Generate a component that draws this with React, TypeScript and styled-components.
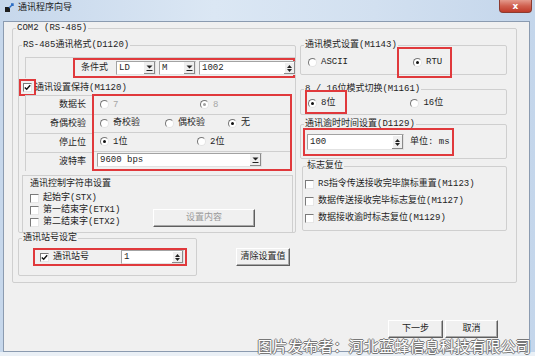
import React from 'react';
import styled, { createGlobalStyle } from 'styled-components';

const RED = '#e0393c';
const LINE = '#cfcfcf';

const GlobalStyle = createGlobalStyle`
  html, body { margin: 0; padding: 0; }
  body {
    width: 535px;
    height: 356px;
    overflow: hidden;
    background: #eaf0f6;
    font-family: "Liberation Mono", "Noto Sans CJK SC", monospace;
    font-size: 9px;
    line-height: 10px;
    color: #1e1e1e;
  }
`;

const Page = styled.div`
  position: relative;
  width: 535px;
  height: 356px;
`;

const Window = styled.div`
  width: 535px;
  height: 352px;
  display: flex;
  flex-direction: column;
  background: linear-gradient(90deg, #c6d7eb 0%, #dbe7f4 40%, #d2e0f0 70%, #c4d6eb 100%);
`;

const TitleBar = styled.div`
  height: 21px;
  flex: none;
  display: flex;
  align-items: flex-start;
  padding-left: 5px;
`;

const TitleIcon = styled.svg`
  margin-top: 3px;
  flex: none;
`;

const TitleText = styled.span`
  margin: 3px 0 0 4px;
  color: #1a1a1a;
`;

const CloseButton = styled.div`
  margin: 0 3px 0 auto;
  width: 33px;
  height: 13px;
  box-sizing: border-box;
  border: 1px solid #8c3b30;
  border-top: none;
  border-radius: 0 0 4px 4px;
  background: linear-gradient(180deg, #e49a8c 0%, #d0604f 50%, #bf3b2a 100%);
  color: #fff;
  font-family: "DejaVu Sans", sans-serif;
  font-weight: bold;
  font-size: 9px;
  line-height: 12px;
  text-align: center;
`;

const Body = styled.div`
  flex: 1;
  margin: 0 5px 0 3px;
  background: #f0f0f0;
  border: 1px solid #8b9bb0;
  padding: 1px 0 0 8px;
  display: flex;
  flex-direction: column;
`;

const Group = styled.fieldset<{ $w: number; $h: number }>`
  margin: 0;
  padding: 0;
  min-width: 0;
  box-sizing: border-box;
  width: ${p => p.$w}px;
  height: ${p => p.$h}px;
  border: 1px solid ${LINE};
  border-radius: 2px;
`;

const Legend = styled.legend`
  margin-left: 3px;
  padding: 0 1px;
  line-height: 10px;
`;

const Columns = styled.div`
  display: flex;
  gap: 4px;
  padding: 7px 9px 0 5px;
`;

const Column = styled.div`
  display: flex;
  flex-direction: column;
`;

const GroupInner = styled.div<{ $pad: string }>`
  padding: ${p => p.$pad};
  display: flex;
  flex-direction: column;
`;

/* red annotation box that does not take any room in the flow */
const Mark = styled.div<{ $t: number; $r: number; $b: number; $l: number }>`
  display: inline-flex;
  align-items: center;
  flex: none;
  border: 2px solid ${RED};
  padding: ${p => `${p.$t}px ${p.$r}px ${p.$b}px ${p.$l}px`};
  margin: ${p => `${-p.$t - 2}px ${-p.$r - 2}px ${-p.$b - 2}px ${-p.$l - 2}px`};
`;

const RedFrame = styled.div`
  border: 2px solid ${RED};
  box-sizing: border-box;
`;

const ConditionRow = styled.div`
  height: 20px;
  display: flex;
  justify-content: flex-end;
  border-top: 1px solid ${LINE};
  border-left: 1px solid ${LINE};
`;

const ConditionBox = styled(RedFrame)`
  width: 222px;
  display: flex;
  align-items: center;
  gap: 3px;
  padding-left: 6px;
`;

const Plain = styled.span<{ $w?: number }>`
  flex: none;
  ${p => (p.$w ? `width: ${p.$w}px;` : '')}
`;

const Combo = styled.div<{ $w: number }>`
  width: ${p => p.$w}px;
  height: 14px;
  flex: none;
  box-sizing: border-box;
  border: 1px solid #a3a3a3;
  border-right-color: #e2e2e2;
  border-bottom-color: #e2e2e2;
  background: #fff;
  display: flex;
  align-items: center;
  padding-left: 2px;
`;

const ComboBtn = styled.span`
  margin-left: auto;
  width: 11px;
  height: 12px;
  background: #efefef;
  border-left: 1px solid #fff;
  box-shadow: inset -1px -1px 0 #8a8a8a;
  display: flex;
  align-items: center;
  justify-content: center;
`;

const SpinBtn = styled.span`
  margin-left: auto;
  width: 11px;
  height: 100%;
  background: #efefef;
  box-shadow: inset -1px -1px 0 #8a8a8a, inset 1px 1px 0 #fff;
  display: flex;
  flex-direction: column;
  align-items: center;
  justify-content: center;
  gap: 1px;
`;

const CheckRow = styled.div`
  display: flex;
  align-items: center;
  height: 13px;
  margin: 3px 0 0 4px;
  gap: 3px;
`;

const ParamTable = styled.div`
  display: flex;
  margin-left: 6px;
  height: 77px;
`;

const LabelCol = styled.div`
  width: 67px;
  display: flex;
  flex-direction: column;
  padding-top: 1px;
`;

const LabelCell = styled.div`
  height: 19px;
  box-sizing: border-box;
  border-top: 1px solid ${LINE};
  border-left: 1px solid ${LINE};
  display: flex;
  align-items: center;
  justify-content: flex-end;
  padding-right: 6px;
`;

const ValueCol = styled(RedFrame)`
  width: 200px;
  display: flex;
  flex-direction: column;
`;

const ValueRow = styled.div<{ $pl?: number }>`
  flex: 1;
  display: flex;
  align-items: center;
  padding-left: ${p => p.$pl ?? 6}px;
  & + & {
    border-top: 1px solid ${LINE};
  }
`;

const Option = styled.span<{ $w?: number; $off?: boolean }>`
  display: inline-flex;
  align-items: center;
  gap: 4px;
  flex: none;
  ${p => (p.$w ? `width: ${p.$w}px;` : '')}
  color: ${p => (p.$off ? '#a6a6a6' : 'inherit')};
`;

const RadioDot = styled.span<{ $on?: boolean; $off?: boolean }>`
  width: 9px;
  height: 9px;
  box-sizing: border-box;
  border-radius: 50%;
  border: 1px solid;
  border-color: #777 #e4e4e4 #e4e4e4 #777;
  background: #fff;
  display: inline-flex;
  align-items: center;
  justify-content: center;
  flex: none;
  &::after {
    content: '';
    width: 3px;
    height: 3px;
    border-radius: 50%;
    background: ${p => (p.$off ? '#a0a0a0' : '#111')};
    display: ${p => (p.$on ? 'block' : 'none')};
  }
`;

const BoxMark = styled.span`
  width: 9px;
  height: 9px;
  box-sizing: border-box;
  border: 1px solid;
  border-color: #7a7a7a #e6e6e6 #e6e6e6 #7a7a7a;
  background: #fff;
  display: inline-flex;
  align-items: center;
  justify-content: center;
  flex: none;
`;

const CtrlPanel = styled.div`
  margin: 4px 0 0 3px;
  width: 271px;
  height: 58px;
  box-sizing: border-box;
  border: 1px solid ${LINE};
  padding: 3px 0 0 7px;
`;

const CtrlGrid = styled.div`
  display: grid;
  grid-template-columns: 123px 102px;
  align-items: end;
  margin-top: 4px;
`;

const CheckList = styled.div<{ $gap: number }>`
  display: flex;
  flex-direction: column;
  gap: ${p => p.$gap}px;
`;

const Btn = styled.div<{ $w: number; $off?: boolean }>`
  width: ${p => p.$w}px;
  height: 18px;
  flex: none;
  box-sizing: border-box;
  border: 1px solid;
  border-color: #fff #5e5e5e #5e5e5e #fff;
  box-shadow: inset -1px -1px 0 #a8a8a8;
  background: #f0f0f0;
  color: ${p => (p.$off ? '#9a9a9a' : '#1e1e1e')};
  display: flex;
  align-items: center;
  justify-content: center;
`;

const ClearBtn = styled(Btn)`
  margin: 15px 0 0 39px;
`;

const StationRow = styled.div`
  display: flex;
  align-items: flex-start;
`;

const StationBox = styled(RedFrame)`
  width: 154px;
  height: 18px;
  display: flex;
  align-items: center;
  padding-left: 5px;
`;

const Spin = styled.div<{ $w: number; $h: number }>`
  width: ${p => p.$w}px;
  height: ${p => p.$h}px;
  flex: none;
  box-sizing: border-box;
  border: 1px solid #a3a3a3;
  border-right-color: #e2e2e2;
  border-bottom-color: #e2e2e2;
  background: #fff;
  display: flex;
  align-items: center;
  padding-left: 2px;
`;

const OptionRow = styled.div<{ $h?: number }>`
  display: flex;
  align-items: center;
  height: ${p => p.$h ?? 10}px;
`;

const RightGroup = styled(Group)<{ $mt: number; $ml?: number }>`
  margin-top: ${p => p.$mt}px;
  margin-left: ${p => p.$ml ?? 0}px;
`;

const Spacer = styled.span<{ $w: number }>`
  width: ${p => p.$w}px;
  flex: none;
`;

const UnitText = styled.span`
  margin-left: 6px;
`;

const Footer = styled.div`
  display: flex;
  justify-content: flex-end;
  gap: 2px;
  margin: 37px 31px 0 0;
`;

const Watermark = styled.div`
  position: absolute;
  right: 4px;
  bottom: 1px;
  font-family: "Noto Sans CJK SC", sans-serif;
  font-size: 15px;
  line-height: 18px;
  color: #fff;
  letter-spacing: 0.2px;
  text-shadow: 1px 0 0 #777, -1px 0 0 #777, 0 1px 0 #777, 0 -1px 0 #777;
`;

const Arrow = ({ up }: { up?: boolean }) => (
  <svg width="5" height="3" viewBox="0 0 5 3">
    <path d={up ? 'M0 3L2.5 0L5 3Z' : 'M0 0L5 0L2.5 3Z'} fill="#222" />
  </svg>
);

const DropArrow = () => (
  <svg width="7" height="6" viewBox="0 0 7 6">
    <path d="M0.5 0.5H6.5L3.5 3.5Z" fill="#222" />
    <path d="M0.5 5.5H6.5" stroke="#222" strokeWidth="1" />
  </svg>
);

const Tick = () => (
  <svg width="7" height="7" viewBox="0 0 7 7">
    <path d="M0.8 3.4L2.7 5.3L6.2 1.3" stroke="#111" strokeWidth="1.4" fill="none" />
  </svg>
);

const Radio = ({ label, on, off, w }: { label: string; on?: boolean; off?: boolean; w?: number }) => (
  <Option $w={w} $off={off}>
    <RadioDot $on={on} $off={off} />
    {label}
  </Option>
);

const Check = ({ label, on, w }: { label: string; on?: boolean; w?: number }) => (
  <Option $w={w}>
    <BoxMark>{on && <Tick />}</BoxMark>
    {label}
  </Option>
);

const ComboBox = ({ w, value }: { w: number; value: string }) => (
  <Combo $w={w}>
    {value}
    <ComboBtn>
      <DropArrow />
    </ComboBtn>
  </Combo>
);

const SpinBox = ({ w, h, value }: { w: number; h: number; value: string }) => (
  <Spin $w={w} $h={h}>
    {value}
    <SpinBtn>
      <Arrow up />
      <Arrow />
    </SpinBtn>
  </Spin>
);

const App = () => {
  return (
    <>
      <GlobalStyle />
      <Page>
        <Window>
          <TitleBar>
            <TitleIcon width="9" height="9" viewBox="0 0 9 9">
              <rect x="0" y="4" width="5" height="5" fill="#1d1d1d" />
              <path d="M4 5L8 1M6 1H8V3" stroke="#2a6cc4" strokeWidth="1.4" fill="none" />
            </TitleIcon>
            <TitleText>通讯程序向导</TitleText>
            <CloseButton>x</CloseButton>
          </TitleBar>

          <Body>
            <Group $w={505} $h={260}>
              <Legend>COM2 (RS-485)</Legend>
              <Columns>
                {/* left side */}
                <Column>
                  <Group $w={278} $h={193}>
                    <Legend>RS-485通讯格式(D1120)</Legend>
                    <GroupInner $pad="7px 0 0 6px">
                      <ConditionRow>
                        <ConditionBox>
                          <Plain $w={32}>条件式</Plain>
                          <ComboBox w={40} value="LD" />
                          <ComboBox w={37} value="M" />
                          <SpinBox w={97} h={14} value="1002" />
                        </ConditionBox>
                      </ConditionRow>
                    </GroupInner>
                    <CheckRow>
                      <Mark $t={2} $r={2} $b={2} $l={2}>
                        <BoxMark>
                          <Tick />
                        </BoxMark>
                      </Mark>
                      <Plain>通讯设置保持(M1120)</Plain>
                    </CheckRow>
                    <ParamTable>
                      <LabelCol>
                        <LabelCell>数据长</LabelCell>
                        <LabelCell>奇偶校验</LabelCell>
                        <LabelCell>停止位</LabelCell>
                        <LabelCell>波特率</LabelCell>
                      </LabelCol>
                      <ValueCol>
                        <ValueRow>
                          <Radio label="7" off w={100} />
                          <Radio label="8" off on />
                        </ValueRow>
                        <ValueRow>
                          <Radio label="奇校验" w={65} />
                          <Radio label="偶校验" w={63} />
                          <Radio label="无" on />
                        </ValueRow>
                        <ValueRow>
                          <Radio label="1位" on w={97} />
                          <Radio label="2位" />
                        </ValueRow>
                        <ValueRow $pl={3}>
                          <ComboBox w={165} value="9600 bps" />
                        </ValueRow>
                      </ValueCol>
                    </ParamTable>
                    <CtrlPanel>
                      <Plain>通讯控制字符串设置</Plain>
                      <CtrlGrid>
                        <CheckList $gap={2}>
                          <Check label="起始字(STX)" />
                          <Check label="第一结束字(ETX1)" />
                          <Check label="第二结束字(ETX2)" />
                        </CheckList>
                        <Btn $w={102} $off>
                          设置内容
                        </Btn>
                      </CtrlGrid>
                    </CtrlPanel>
                  </Group>

                  <StationRow>
                    <Group $w={179} $h={43}>
                      <Legend>通讯站号设定</Legend>
                      <GroupInner $pad="5px 0 0 14px">
                        <StationBox>
                          <Check label="通讯站号" on w={81} />
                          <SpinBox w={63} h={14} value="1" />
                        </StationBox>
                      </GroupInner>
                    </Group>
                    <ClearBtn $w={54}>清除设置值</ClearBtn>
                  </StationRow>
                </Column>

                {/* right side */}
                <Column>
                  <RightGroup $w={207} $h={35} $mt={0}>
                    <Legend>通讯模式设置(M1143)</Legend>
                    <GroupInner $pad="7px 0 0 7px">
                      <OptionRow>
                        <Radio label="ASCII" w={105} />
                        <Mark $t={8} $r={8} $b={9} $l={14}>
                          <Radio label="RTU" on />
                        </Mark>
                      </OptionRow>
                    </GroupInner>
                  </RightGroup>

                  <RightGroup $w={207} $h={31} $mt={9}>
                    <Legend>8 / 16位模式切换(M1161)</Legend>
                    <GroupInner $pad="4px 0 0 7px">
                      <OptionRow>
                        <Mark $t={6} $r={10} $b={4} $l={1}>
                          <Radio label="8位" on />
                        </Mark>
                        <Spacer $w={75} />
                        <Radio label="16位" />
                      </OptionRow>
                    </GroupInner>
                  </RightGroup>

                  <RightGroup $w={207} $h={40} $mt={4}>
                    <Legend>通讯逾时时间设置(D1129)</Legend>
                    <GroupInner $pad="5px 0 0 6px">
                      <OptionRow $h={16}>
                        <Mark $t={4} $r={2} $b={4} $l={2}>
                          <SpinBox w={97} h={16} value="100" />
                          <UnitText>单位: ms</UnitText>
                        </Mark>
                      </OptionRow>
                    </GroupInner>
                  </RightGroup>

                  <RightGroup $w={205} $h={70} $mt={2} $ml={2}>
                    <Legend>标志复位</Legend>
                    <GroupInner $pad="8px 0 0 2px">
                      <CheckList $gap={7}>
                        <Check label="RS指令传送接收完毕旗标重置(M1123)" />
                        <Check label="数据传送接收完毕标志复位(M1127)" />
                        <Check label="数据接收逾时标志复位(M1129)" />
                      </CheckList>
                    </GroupInner>
                  </RightGroup>
                </Column>
              </Columns>
            </Group>

            <Footer>
              <Btn $w={55}>下一步</Btn>
              <Btn $w={53}>取消</Btn>
            </Footer>
          </Body>
        </Window>
        <Watermark>图片发布者：河北蓝蜂信息科技有限公司</Watermark>
      </Page>
    </>
  );
};

export default App;
